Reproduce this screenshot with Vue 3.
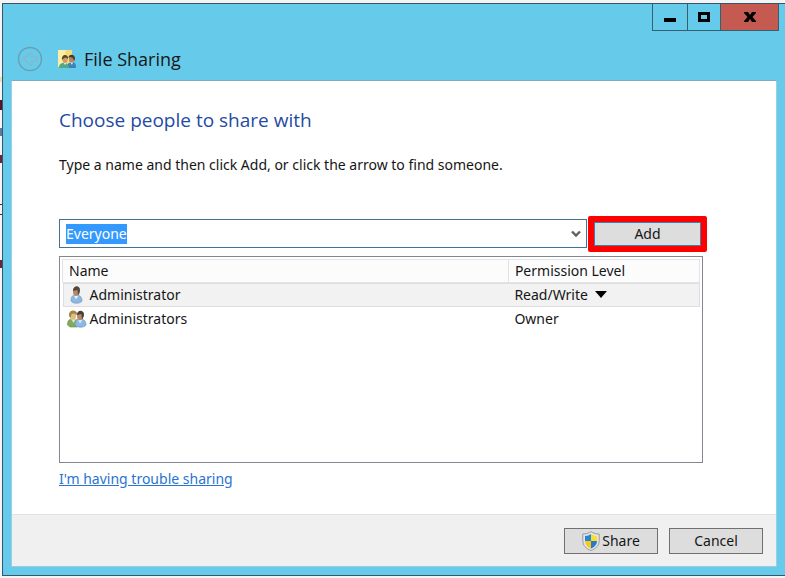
<script setup>
import { onMounted, ref } from 'vue'

const person = ref('Everyone')
const nameField = ref(null)
const people = [
  { name: 'Administrator', level: 'Read/Write', group: false, editable: true },
  { name: 'Administrators', level: 'Owner', group: true, editable: false },
]

onMounted(() => {
  nameField.value.focus()
  nameField.value.select()
})
</script>

<template>
  <div class="desktop">
    <main class="window">
      <header class="titlebar">
        <div class="controls">
          <button class="control minimize" type="button" aria-label="Minimize">
            <svg width="14" height="12" viewBox="0 0 14 12"><path d="M1 7h12v4H1z" /></svg>
          </button>
          <button class="control maximize" type="button" aria-label="Maximize">
            <svg width="14" height="12" viewBox="0 0 14 12"><path fill-rule="evenodd" d="M1 1h12v10H1zM4 4v4h6V4z" /></svg>
          </button>
          <button class="control close" type="button" aria-label="Close">
            <svg width="14" height="12" viewBox="0 0 14 12"><path d="M1 1h4l2 3 2-3h4v1L9.500 6l3.500 4v1H9L7 8l-2 3H1v-1l3.500-4L1 2z" /></svg>
          </button>
        </div>
        <div class="caption">
          <button class="back" type="button" aria-label="Back" disabled>
            <svg width="26" height="26" viewBox="0 0 26 26" fill="none" stroke="#6c9eb1">
              <circle cx="13" cy="13" r="11.500" stroke-width="1.400" />
              <path d="M6.500 13l6-5.500h2.500v3.500h5v4h-5v3.500h-2.500z" stroke="#8fb3c0" stroke-width="1.200" stroke-linejoin="round" />
            </svg>
          </button>
          <svg class="folder" width="20" height="20" viewBox="0 0 20 20">
            <path d="M1 1h14v18H1z" fill="#f5da7c" />
            <path d="M1 1h8L4 19H1z" fill="#fdeea6" />
            <path d="M1 18.500h15" stroke="#d5aa48" />
            <path d="M10 19c0-4 2-6 5-6s4 2 4 6z" fill="#3f83b5" />
            <path d="M13 13l2 3 1-3z" fill="#e0edf0" />
            <ellipse cx="14.500" cy="10" rx="2.500" ry="3.500" fill="#b78558" />
            <path d="M11.500 9c0-5 7-4 6.500 1l-1 2-1-3-3-1z" fill="#443e32" />
            <path d="M2 19c0-4 2-5 5-5s5 2 5 5z" fill="#51a988" />
            <path d="M6 13l2 3 2-3z" fill="#e0f0e4" />
            <ellipse cx="8" cy="10.500" rx="2.500" ry="3.500" fill="#d09c68" />
            <path d="M5 11c-1-7 7-6 6-1L9 8.500 7 9z" fill="#55472f" />
          </svg>
          <span class="caption-text">File Sharing</span>
        </div>
      </header>

      <form class="panel" @submit.prevent>
        <section class="content">
          <h1>Choose people to share with</h1>
          <p>Type a name and then click Add, or click the arrow to find someone.</p>

          <div class="picker">
            <div class="combo">
              <input ref="nameField" v-model="person" type="text" aria-label="Name of person to share with" spellcheck="false" />
              <button type="button" class="arrow" aria-label="Find someone">
                <svg width="10" height="8" viewBox="0 0 10 8" fill="none" stroke="#606060" stroke-width="2.400"><path d="M1 1.500l4 4 4-4" /></svg>
              </button>
            </div>
            <div class="callout"><button type="button" class="add">Add</button></div>
          </div>

          <div class="list">
            <table>
              <thead>
                <tr><th scope="col" class="name-column">Name</th><th scope="col">Permission Level</th></tr>
              </thead>
              <tbody>
                <tr v-for="entry in people" :key="entry.name" :class="{ selected: entry.editable }">
                  <td>
                    <div class="entry">
                      <svg width="20" height="18" viewBox="0 0 20 18">
                        <template v-if="entry.group">
                          <path d="M.5 15c0-4 1-6 5.500-6s6 2 6 6l-2 2H3z" fill="#83aa5c" stroke="#668b45" stroke-width=".6" />
                          <path d="M4 9l2.500 4L9 9" fill="#dce6c6" />
                          <ellipse cx="6" cy="5.500" rx="3.200" ry="4.200" fill="#e2bd80" />
                          <path d="M2 6c-1-7 9-7 8-1L7 3.500 4.500 4 3.500 8z" fill="#a18643" />
                          <path d="M8 15c0-4 1-6 5-6s6 2 6 6c-2 3-9 3-11 0z" fill="#8bb9e2" stroke="#658fb8" stroke-width=".6" />
                          <path d="M11 9.500l2 4 2.500-4" fill="#e4edf5" />
                          <ellipse cx="13" cy="6" rx="3" ry="4.200" fill="#b78767" />
                          <path d="M10 5c0-6 7-5 7-1 0 3-1 4-2 5.500L14.500 4z" fill="#493f39" />
                        </template>
                        <template v-else>
                          <path d="M4 15c0-4 1-6 5-6s6 2 6 6c-2 3-9 3-11 0z" fill="#8db9e1" stroke="#6f9cc5" stroke-width=".7" />
                          <path d="M7 9.500l2 4 2.500-4" fill="#edf3fa" />
                          <ellipse cx="9" cy="5.500" rx="3" ry="4.500" fill="#b78867" />
                          <path d="M6 5c0-6 7-6 7-1 0 3-1 4-2 5.500L10.500 4z" fill="#514740" />
                        </template>
                      </svg>
                      <span>{{ entry.name }}</span>
                    </div>
                  </td>
                  <td>
                    <button v-if="entry.editable" type="button" class="level">
                      {{ entry.level }}
                      <svg width="12" height="7" viewBox="0 0 12 7"><path d="M0 0h12L6 7z" /></svg>
                    </button>
                    <template v-else>{{ entry.level }}</template>
                  </td>
                </tr>
              </tbody>
            </table>
          </div>
          <a href="#help">I'm having trouble sharing</a>
        </section>

        <footer>
          <button type="submit" class="action">
            <svg width="18" height="20" viewBox="0 0 18 20">
              <path d="M9 .6C6.500 2.500 4 3 .8 3v6.500c0 5 3 8 8.200 10 5.200-2 8.200-5 8.200-10V3C14 3 11.500 2.500 9 .6z" fill="#e4e6e8" stroke="#969b9f" />
              <path d="M9 3v7H3V5c2.500 0 4.300-.7 6-2z" fill="#2685d9" />
              <path d="M9 3c1.700 1.300 3.500 2 6 2v5H9z" fill="#ffdc28" />
              <path d="M3 10h6v7.500C5.500 16 3 13.500 3 10z" fill="#f8cb18" />
              <path d="M9 10h6c0 3.500-2.500 6-6 7.500z" fill="#2878cb" />
            </svg>
            <span>Share</span>
          </button>
          <button type="button" class="action">Cancel</button>
        </footer>
      </form>
    </main>
  </div>
</template>

<style>
body {
  margin: 0;
}
</style>

<style scoped>
* {
  box-sizing: border-box;
}

.desktop {
  display: flex;
  min-height: 100vh;
  padding: 3px 0 2px 2px;
  background: linear-gradient(#f4f4f4 0 77px, #eee1a5 77px 82px, #f4f4f4 82px 100px, #541528 100px 110px, #f4f4f4 110px 128px, #607b9d 128px 136px, #f4f4f4 136px 155px, #6c263a 155px 163px, #f4f4f4 163px 204px, #333 204px 205px, #f4f4f4 205px 214px, #333 214px 215px, #f4f4f4 215px 260px, #6c263a 260px 268px, #f4f4f4 268px);
  color: #161616;
  font: 14px/20px "Noto Sans", "Open Sans", sans-serif;
}

button,
input {
  margin: 0;
  padding: 0;
  border: 0;
  border-radius: 0;
  color: inherit;
  font: inherit;
}

svg {
  flex: none;
}

.window {
  display: flex;
  flex: 1;
  flex-direction: column;
  min-width: 0;
  padding: 0 8px 8px;
  border: 1px solid #36566a;
  border-right: 0;
  background: #66caea;
}

.titlebar {
  display: flex;
  flex-direction: column;
  height: 76px;
}

.controls {
  display: flex;
  align-self: flex-end;
  height: 27px;
  margin-right: -2px;
}

.control {
  display: flex;
  align-items: center;
  justify-content: center;
  width: 35px;
  border: 1px solid #365f70;
  border-top: 0;
  border-right: 0;
  background: transparent;
}

.maximize {
  width: 33px;
}

.close {
  width: 59px;
  border-right: 1px solid #365f70;
  background: #c55b50;
}

.caption {
  display: flex;
  flex: 1;
  align-items: center;
  padding: 7px 0 0 6px;
}

.back {
  height: 26px;
  background: transparent;
}

.folder {
  margin: 0 7px 0 14px;
}

.caption-text {
  font-family: "Open Sans", sans-serif;
  font-size: 18px;
  line-height: 24px;
}

.panel {
  display: flex;
  flex: 1;
  flex-direction: column;
  border: 1px solid #9ccde0;
  border-top-color: #83a9be;
  background: #fff;
}

.content {
  flex: 1;
  padding: 25px 73px 24px 47px;
}

h1 {
  margin: 0;
  color: #1f4aa5;
  font-family: "Open Sans", sans-serif;
  font-size: 19px;
  font-weight: 400;
  line-height: 28px;
}

p {
  margin: 21px 0 44px;
}

.picker {
  display: flex;
  align-items: center;
  gap: 1px;
  height: 29px;
  margin-right: -4px;
}

.combo {
  display: flex;
  flex: 1;
  align-items: center;
  height: 29px;
  min-width: 0;
  padding: 0 5px 0 6px;
  border: 1px solid #40739a;
}

input {
  flex: 1;
  min-width: 0;
  outline: 0;
  background: transparent;
}

input::selection {
  background: #3399ff;
  color: #fff;
}

.arrow {
  display: flex;
  background: transparent;
}

.callout {
  width: 119px;
  height: 36px;
  border: 6px solid #f00;
  border-radius: 2px;
}

.add {
  width: 100%;
  height: 24px;
  border: 1px solid #3c7fb1;
  background: #ddd;
}

.list {
  min-height: 207px;
  margin: 8px 0 6px;
  padding: 2px;
  border: 1px solid #828790;
}

table {
  width: 100%;
  border-collapse: collapse;
  table-layout: fixed;
}

th,
td {
  height: 24px;
  padding: 0 6px;
  font-weight: 400;
  text-align: left;
}

th {
  height: 23px;
  border: 1px solid #e3e3e3;
  background: #fcfcfc;
}

.name-column {
  width: 70%;
}

td:first-child {
  padding-left: 4px;
}

.selected {
  outline: 1px solid #dedede;
  outline-offset: -1px;
  background: #f2f2f2;
}

.entry {
  display: flex;
  align-items: center;
  gap: 3px;
}

.level {
  display: flex;
  align-items: center;
  gap: 7px;
  background: transparent;
}

a {
  color: #2874d1;
}

footer {
  display: flex;
  align-items: center;
  justify-content: flex-end;
  gap: 11px;
  height: 52px;
  padding: 0 13px;
  border-top: 1px solid #e2e2e2;
  background: #f0f0f0;
}

.action {
  display: flex;
  align-items: center;
  justify-content: center;
  gap: 2px;
  width: 94px;
  height: 26px;
  border: 1px solid #707070;
  background: #ddd;
}
</style>
